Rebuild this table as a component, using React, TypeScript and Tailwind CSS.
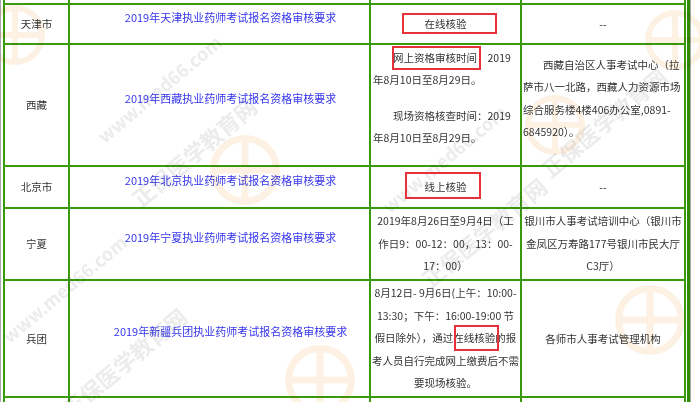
import React from "react";

const cell = "bg-white";

function Wm({ x, y, size = 60 }: { x: number; y: number; size?: number }) {
  return (
    <div className="absolute pointer-events-none mix-blend-multiply" style={{ left: x, top: y, width: size, height: size }}>
      <svg viewBox="0 0 60 60" width={size} height={size}>
        <circle cx="30" cy="30" r="27" fill="none" stroke="#fcf1e3" strokeWidth="6" />
        <path d="M30 6 V54 M6 30 H54" stroke="#fcf1e3" strokeWidth="6" />
      </svg>
    </div>
  );
}

function WmText({ x, y, text, size = 22 }: { x: number; y: number; text: string; size?: number }) {
  return (
    <div
      className="absolute pointer-events-none whitespace-nowrap font-bold text-[#ececec] mix-blend-multiply origin-left -rotate-[40deg]"
      style={{ left: x, top: y, fontSize: size }}
    >
      {text}
    </div>
  );
}

export default function App() {
  return (
    <div className="relative w-[700px] h-[402px] overflow-hidden bg-white font-['Noto_Sans_CJK_SC',sans-serif] text-[10.5px] text-[#333]">
      <div className="flex h-full">
        <div className="w-px bg-[#a8a8a8]" />
        <div className="w-[2px]" />
        <div className="grid grid-cols-[63px_299px_149px_162px] grid-rows-[3px_38px_120px_40px_70px_115px_20px] gap-[2px] bg-[#3b9a0c] px-[2px] h-[418px] shrink-0">
          {/* partial row above */}
          <div className={cell} />
          <div className={cell} />
          <div className={cell} />
          <div className={cell} />

          {/* 天津市 */}
          <div className={`${cell} flex items-center justify-center`}>天津市</div>
          <div className={`${cell} flex items-center justify-center pl-[22px] pb-[14px] text-[11px] text-[#3535f0]`}>
            2019年天津执业药师考试报名资格审核要求
          </div>
          <div className={`${cell} flex items-center justify-center`}>在线核验</div>
          <div className={`${cell} flex items-center justify-center`}>--</div>

          {/* 西藏 */}
          <div className={`${cell} flex items-center justify-center`}>西藏</div>
          <div className={`${cell} flex items-center justify-center pl-[22px] pb-[14px] text-[11px] text-[#3535f0]`}>
            2019年西藏执业药师考试报名资格审核要求
          </div>
          <div className={`${cell} pl-[2px] pt-[2px] leading-[21.5px] whitespace-nowrap`}>
            <div className="pl-[20px]">网上资格审核时间：2019</div>
            <div>年8月10日至8月29日。</div>
            <div className="pl-[20px] mt-[15px]">现场资格核查时间：2019</div>
            <div>年8月10日至8月29日。</div>
          </div>
          <div className={`${cell} pl-[1px] pt-[9px] leading-[22.3px] whitespace-nowrap`}>
            <div className="pl-[20px]">西藏自治区人事考试中心（拉</div>
            <div>萨市八一北路，西藏人力资源市场</div>
            <div>综合服务楼4楼406办公室,0891-</div>
            <div>6845920）。</div>
          </div>

          {/* 北京市 */}
          <div className={`${cell} flex items-center justify-center`}>北京市</div>
          <div className={`${cell} flex items-center justify-center pl-[22px] pb-[14px] text-[11px] text-[#3535f0]`}>
            2019年北京执业药师考试报名资格审核要求
          </div>
          <div className={`${cell} flex items-center justify-center`}>线上核验</div>
          <div className={`${cell} flex items-center justify-center`}>--</div>

          {/* 宁夏 */}
          <div className={`${cell} flex items-center justify-center`}>宁夏</div>
          <div className={`${cell} flex items-center justify-center pl-[22px] pb-[14px] text-[11px] text-[#3535f0]`}>
            2019年宁夏执业药师考试报名资格审核要求
          </div>
          <div className={`${cell} flex flex-col justify-center items-center leading-[22.5px] whitespace-nowrap`}>
            <div>2019年8月26日至9月4日（工</div>
            <div>作日9：00-12：00，13：00-</div>
            <div>17：00）</div>
          </div>
          <div className={`${cell} flex flex-col justify-center items-center leading-[22.5px] whitespace-nowrap`}>
            <div>银川市人事考试培训中心（银川市</div>
            <div>金凤区万寿路177号银川市民大厅</div>
            <div>C3厅）</div>
          </div>

          {/* 兵团 */}
          <div className={`${cell} flex items-center justify-center`}>兵团</div>
          <div className={`${cell} flex items-center justify-center pl-[22px] pb-[14px] text-[11px] text-[#3535f0]`}>
            2019年新疆兵团执业药师考试报名资格审核要求
          </div>
          <div className={`${cell} flex flex-col justify-center items-center leading-[22.5px] whitespace-nowrap`}>
            <div>8月12日- 9月6日(上午：10:00-</div>
            <div>13:30；下午：16:00-19:00 节</div>
            <div>假日除外），通过在线核验的报</div>
            <div>考人员自行完成网上缴费后不需</div>
            <div>要现场核验。</div>
          </div>
          <div className={`${cell} flex items-center justify-center`}>各师市人事考试管理机构</div>

          {/* partial row below */}
          <div className={cell} />
          <div className={cell} />
          <div className={cell} />
          <div className={cell} />
        </div>
        <div className="w-px" />
        <div className="w-[3px] bg-[#2f8c04]" />
        <div className="w-px bg-[#a8a8a8]" />
      </div>

      {/* watermark */}
      <Wm x={-15} y={5} size={60} />
      <Wm x={210} y={135} size={70} />
      <Wm x={525} y={95} size={60} />
      <Wm x={645} y={10} size={60} />
      <Wm x={615} y={285} size={70} />
      <Wm x={285} y={345} size={70} />
      <WmText x={100} y={125} text="www.med66.com" size={18} />
      <WmText x={135} y={185} text="正保医学教育网" size={22} />
      <WmText x={385} y={195} text="www.med66.com" size={18} />
      <WmText x={425} y={265} text="正保医学教育网" size={22} />
      <WmText x={5} y={325} text="www.med66.com" size={18} />
      <WmText x={65} y={395} text="正保医学教育网" size={22} />
      <WmText x={545} y={155} text="正保医学教育网" size={22} />

      {/* red annotation boxes */}
      <div className="absolute left-[402px] top-[13px] w-[95px] h-[21px] border-2 border-[#e8323a]" />
      <div className="absolute left-[392px] top-[46px] w-[89px] h-[24px] border-2 border-[#e8323a]" />
      <div className="absolute left-[405px] top-[172px] w-[76px] h-[27px] border-2 border-[#e8323a]" />
      <div className="absolute left-[454px] top-[325px] w-[45px] h-[26px] border-2 border-[#e8323a]" />
    </div>
  );
}
